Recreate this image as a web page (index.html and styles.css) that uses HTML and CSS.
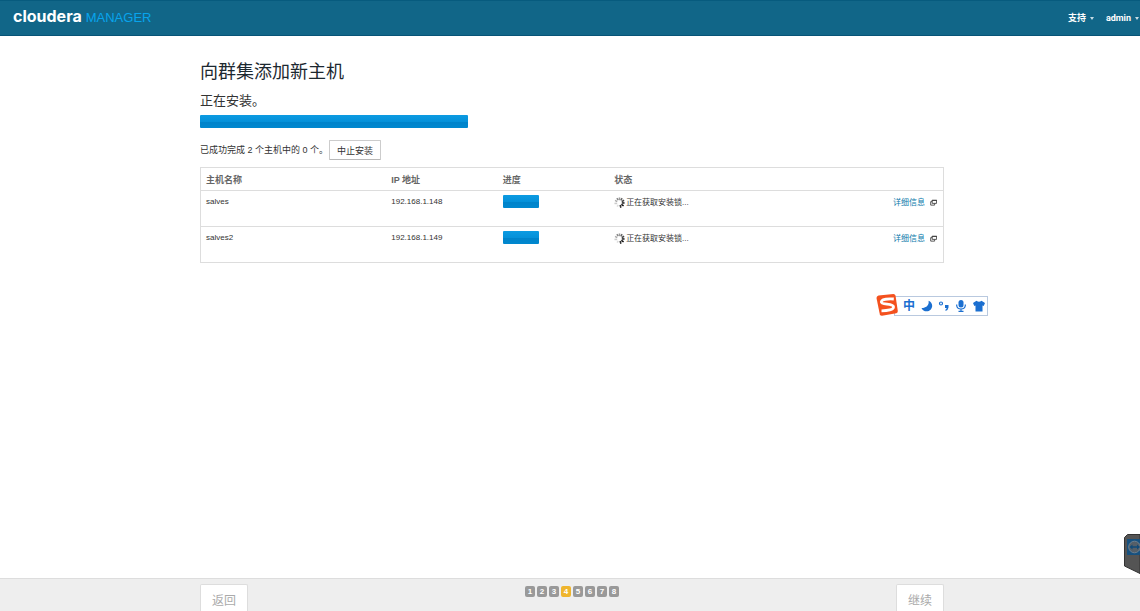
FILE: index.html
```html
<!DOCTYPE html>
<html lang="zh-CN">
<head>
<meta charset="utf-8">
<title>Cloudera Manager</title>
<link rel="stylesheet" href="styles.css">
</head>
<body>
<svg class="defs" width="0" height="0" aria-hidden="true">
  <symbol id="spinner" viewBox="0 0 12 12">
    <g fill="none" stroke-width="1.700">
      <path d="M6 .5v3" stroke="#999"/>
      <path d="M8.800 1.200L7.500 3.700" stroke="#666"/>
      <path d="M11 3.500L8.500 5" stroke="#444"/>
      <path d="M11.500 6.500h-3" stroke="#222"/>
      <path d="M10.500 9.800L8 8" stroke="#111"/>
      <path d="M7.500 11.700L6.700 8.800" stroke="#333"/>
      <path d="M3.500 10.500L4.500 8.500" stroke="#ddd"/>
      <path d="M.5 7h3" stroke="#ccc"/>
      <path d="M1.200 3.700L3.500 5" stroke="#aaa"/>
      <path d="M3.200 1.200L4.500 3.500" stroke="#888"/>
    </g>
  </symbol>
  <symbol id="popup" viewBox="0 0 8 8">
    <path d="M2.500 1.500h5v3.500h-5zM2.500 3H.8v4h4.500V5" fill="none" stroke="#444" stroke-width="1"/>
    <path d="M2 1h6v1.200H2z" fill="#444"/>
  </symbol>
</svg>

<header class="topbar">
  <a class="brand" href="#"><span class="brand-name">cloudera</span><span class="brand-product">MANAGER</span></a>
  <nav class="topnav">
    <a href="#">支持<i class="caret"></i></a>
    <a href="#">admin<i class="caret"></i></a>
  </nav>
</header>

<main class="content">
  <h1>向群集添加新主机</h1>
  <h2>正在安装。</h2>
  <div class="bar bar-total" role="progressbar" aria-label="安装进度"></div>
  <div class="summary">
    <span>已成功完成 2 个主机中的 0 个。</span>
    <button class="abort" type="button">中止安装</button>
  </div>
  <table class="hosts">
    <colgroup><col class="col-name"><col class="col-ip"><col class="col-progress"><col></colgroup>
    <thead>
      <tr><th>主机名称</th><th>IP 地址</th><th>进度</th><th>状态</th></tr>
    </thead>
    <tbody>
      <tr>
        <td>salves</td><td>192.168.1.148</td>
        <td><div class="bar bar-host" role="progressbar" aria-label="salves"></div></td>
        <td><div class="status"><svg class="spinner"><use href="#spinner"/></svg><span>正在获取安装锁...</span><a href="#">详细信息</a><svg class="popup"><use href="#popup"/></svg></div></td>
      </tr>
      <tr>
        <td>salves2</td><td>192.168.1.149</td>
        <td><div class="bar bar-host" role="progressbar" aria-label="salves2"></div></td>
        <td><div class="status"><svg class="spinner"><use href="#spinner"/></svg><span>正在获取安装锁...</span><a href="#">详细信息</a><svg class="popup"><use href="#popup"/></svg></div></td>
      </tr>
    </tbody>
  </table>
</main>

<footer class="wizard">
  <button type="button" disabled>返回</button>
  <ol class="steps">
    <li>1</li><li>2</li><li>3</li><li class="current">4</li><li>5</li><li>6</li><li>7</li><li>8</li>
  </ol>
  <button type="button" disabled>继续</button>
</footer>

<div class="ime">
  <svg class="ime-logo" viewBox="0 0 24 24">
    <path d="M3.500 2.500L18.500 1q1.500 0 2 1.500L22.800 18q0 1.800-1.500 2.300L7 22.800q-1.700 0-2.200-1.500L1.500 5q0-2 2-2.500z" fill="#f4511e"/>
    <path d="M18.800 6C13 5.600 6.500 6.200 6.300 8.800c-.3 3.200 12 1.500 12.200 5 .2 3-6 4-12 4" fill="none" stroke="#fff" stroke-width="2.800"/>
  </svg>
  <span class="ime-mode">中</span>
  <svg class="ime-icon" viewBox="0 0 12 12"><path d="M7.500.8C8.500 5 5 8.200.5 8 2 11.800 7 12.500 9.800 9.500 12.500 6.300 11 2 7.500.8z" fill="#1b6fd0"/></svg>
  <svg class="ime-icon" viewBox="0 0 12 12"><circle cx="3" cy="3.500" r="1.500" fill="none" stroke="#1b6fd0" stroke-width="1.200"/><path d="M7 5h3.500v2.500Q10 10.500 7.500 11V9.600Q8.600 9.200 8.600 8H7z" fill="#1b6fd0"/></svg>
  <svg class="ime-icon" viewBox="0 0 12 12"><rect x="3.500" y="0" width="5" height="7.500" rx="2.500" fill="#1b6fd0"/><path d="M1.700 4.500v1Q2 9 6 9t4.300-3.500v-1M6 9v2.400M3.500 11.400h5" fill="none" stroke="#1b6fd0" stroke-width="1.200"/></svg>
  <svg class="ime-icon" viewBox="0 0 12 12"><path d="M3.500.8Q6 2.800 8.500.8L12 3l-1.300 3L9.500 5.500v6h-7v-6L1.300 6 0 3z" fill="#1b6fd0"/></svg>
</div>

<svg class="remote-tab" viewBox="0 0 16 40">
  <path d="M16 .5H3.500L.5 3.500V32l15.500 7.500z" fill="#545454" stroke="#333"/>
  <path d="M3 5h13v16H3z" fill="#17517f"/>
  <circle cx="10.500" cy="13" r="5.800" fill="#555f68" stroke="#6d8090"/>
  <path d="M5.500 13l3-2.500v1.700H13v-1.700l3 2.500-3 2.500v-1.700H8.500v1.700z" fill="#114b79"/>
</svg>
</body>
</html>
```
FILE: styles.css
```css
* { box-sizing: border-box; }

body {
  display: flex;
  flex-direction: column;
  min-height: 100vh;
  margin: 0;
  background: #fff;
  color: #333;
  font: 9px/12px "Liberation Sans", "Noto Sans CJK SC", sans-serif;
}

a { color: #0a78aa; text-decoration: none; }
button { font-family: inherit; }
.defs { position: absolute; }

.topbar {
  display: flex;
  justify-content: space-between;
  height: 36px;
  padding: 0 1px 0 13px;
  background: #116688;
  border-top: 1px solid #075b7e;
  border-bottom: 1px solid #075477;
}
.brand { display: flex; align-items: baseline; gap: 4px; line-height: 30px; }
.brand-name { color: #fff; font-family: Inter, sans-serif; font-size: 16px; font-weight: 700; }
.brand-product { color: #08a4ec; font-size: 13px; }
.topnav {
  display: flex;
  gap: 12px;
  font-family: Roboto, "Noto Sans CJK SC", sans-serif;
  font-weight: 700;
}
.topnav a { display: flex; align-items: center; gap: 4px; height: 34px; color: #fff; }
.caret { border: 2px solid transparent; border-top: 3px solid #c5dce5; border-bottom: 0; }

.content { flex: 1; padding: 22px 196px 20px 200px; }
h1, h2 { margin: 0; font-weight: 400; }
h1 { color: #1c2830; font-size: 18px; line-height: 28px; }
h2 { margin-top: 6px; font-size: 13px; line-height: 18px; }

.bar { height: 13px; background: linear-gradient(#0c9be2, #0591d9 50%, #0083ca 55%, #0088cf); border-radius: 1px; }
.bar-total { width: 36%; margin-top: 5px; }
.bar-host { width: 36px; }

.summary { display: flex; align-items: center; gap: 1px; margin: 12px 0 7px; }
.abort {
  height: 20px;
  padding: 0 7px;
  background: #fff;
  border: 1px solid #ccc;
  border-bottom-color: #b8b8b8;
  border-radius: 1px;
  color: #333;
  font-size: 9px;
}

.hosts { width: 100%; table-layout: fixed; border-collapse: collapse; border: 1px solid #ddd; }
.col-name { width: 25%; }
.col-ip, .col-progress { width: 15%; }
.hosts th, .hosts td { padding: 6px 5px 4px; text-align: left; vertical-align: top; border-top: 1px solid #ddd; }
.hosts th { color: #666; font-weight: 700; }
.hosts td { height: 36px; padding-top: 4px; font-size: 8px; line-height: 14px; }
.status { display: flex; align-items: center; height: 15px; }
.status span { flex: 1; }
.spinner { width: 11px; height: 11px; margin-right: 1px; }
.popup { width: 7px; height: 7px; margin: 0 1px 0 5px; }

.wizard {
  display: flex;
  justify-content: space-between;
  height: 33px;
  padding: 5px 196px 0 200px;
  background: #eee;
  border-top: 1px solid #ddd;
}
.wizard button {
  width: 48px;
  padding: 2px 0 0;
  background: #fff;
  border: 1px solid #ddd;
  border-bottom: 0;
  border-radius: 2px 2px 0 0;
  color: #aaa;
  font-size: 12px;
}
.steps { display: flex; gap: 2px; margin: 2px 0 0; padding: 0; list-style: none; }
.steps li {
  width: 10px;
  height: 11px;
  background: #999;
  border-radius: 2px;
  color: #fff;
  font-size: 8px;
  font-weight: 700;
  line-height: 11px;
  text-align: center;
}
.steps .current { background: #efb52d; }

.ime {
  position: fixed;
  top: 296px;
  right: 152px;
  display: flex;
  align-items: center;
  justify-content: space-between;
  width: 94px;
  height: 20px;
  padding: 0 2px 0 8px;
  background: #fff;
  border: 1px solid #b9c9df;
}
.ime-logo { position: absolute; top: -4px; left: -20px; width: 24px; height: 24px; }
.ime-mode { color: #1b6fd0; font-size: 12px; font-weight: 700; }
.ime-icon { width: 12px; height: 12px; }

.remote-tab { position: fixed; top: 534px; right: 0; width: 16px; height: 40px; }
```
